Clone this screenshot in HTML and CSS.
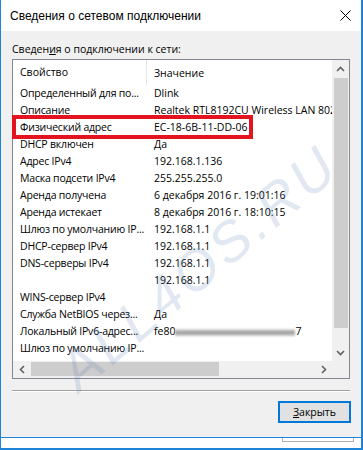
FILE: index.html
```html
<!DOCTYPE html>
<html lang="ru">
  <head>
    <meta charset="UTF-8" />
    <meta name="viewport" content="width=device-width, initial-scale=1.0" />
    <title>Сведения о сетевом подключении</title>
    <link rel="stylesheet" href="styles.css">
  </head>
  <body>
    <div class="window">
      <div class="titlebar">
        <span class="title">Сведения о сетевом подключении</span>
        <svg class="close" width="11" height="11" viewBox="0 0 11 11">
          <path d="M0.5 0.5 L10.5 10.5 M10.5 0.5 L0.5 10.5" stroke="#000" stroke-width="1" fill="none" />
        </svg>
      </div>
      <div class="content">
        <div class="caption">Сведен<u>и</u>я о подключении к сети:</div>
        <div class="listview">
          <div class="lv-main">
            <div class="lv-view">
              <div class="lv-header">
                <div class="col1">Свойство</div>
                <div class="col2">Значение</div>
              </div>
              <div class="row"><div class="col1">Определенный для по...</div><div class="col2">Dlink</div></div>
              <div class="row"><div class="col1">Описание</div><div class="col2">Realtek RTL8192CU Wireless LAN 802.11n USB 2.0 Network Adapter</div></div>
              <div class="row"><div class="col1">Физический адрес</div><div class="col2">EC-18-6B-11-DD-06</div></div>
              <div class="row"><div class="col1">DHCP включен</div><div class="col2">Да</div></div>
              <div class="row"><div class="col1">Адрес IPv4</div><div class="col2">192.168.1.136</div></div>
              <div class="row"><div class="col1">Маска подсети IPv4</div><div class="col2">255.255.255.0</div></div>
              <div class="row"><div class="col1">Аренда получена</div><div class="col2">6 декабря 2016 г. 19:01:16</div></div>
              <div class="row"><div class="col1">Аренда истекает</div><div class="col2">8 декабря 2016 г. 18:10:15</div></div>
              <div class="row"><div class="col1">Шлюз по умолчанию IP...</div><div class="col2">192.168.1.1</div></div>
              <div class="row"><div class="col1">DHCP-сервер IPv4</div><div class="col2">192.168.1.1</div></div>
              <div class="row"><div class="col1">DNS-серверы IPv4</div><div class="col2">192.168.1.1</div></div>
              <div class="row"><div class="col1"></div><div class="col2">192.168.1.1</div></div>
              <div class="row"><div class="col1">WINS-сервер IPv4</div><div class="col2"></div></div>
              <div class="row"><div class="col1">Служба NetBIOS через...</div><div class="col2">Да</div></div>
              <div class="row"><div class="col1">Локальный IPv6-адрес...</div><div class="col2">fe80<span class="blurred"></span>7</div></div>
              <div class="row"><div class="col1">Шлюз по умолчанию IP...</div><div class="col2"></div></div>
              <div class="row"><div class="col1">DNS-серверы IPv6</div><div class="col2"></div></div>
            </div>
            <div class="vscroll">
              <div class="arrow">
                <svg width="9" height="6" viewBox="0 0 9 6"><path d="M1 5 L4.5 1.5 L8 5" stroke="#606060" stroke-width="1.6" fill="none" /></svg>
              </div>
              <div class="vtrack"><div class="vthumb"></div></div>
              <div class="arrow">
                <svg width="9" height="6" viewBox="0 0 9 6"><path d="M1 1 L4.5 4.5 L8 1" stroke="#606060" stroke-width="1.6" fill="none" /></svg>
              </div>
            </div>
          </div>
          <div class="lv-bottom">
            <div class="hscroll">
              <div class="arrow">
                <svg width="6" height="9" viewBox="0 0 6 9"><path d="M5 1 L1.5 4.5 L5 8" stroke="#606060" stroke-width="1.6" fill="none" /></svg>
              </div>
              <div class="htrack"><div class="hthumb"></div></div>
              <div class="arrow">
                <svg width="6" height="9" viewBox="0 0 6 9"><path d="M1 1 L4.5 4.5 L1 8" stroke="#606060" stroke-width="1.6" fill="none" /></svg>
              </div>
            </div>
            <div class="corner"></div>
          </div>
        </div>
        <div class="separator"></div>
        <div class="buttons">
          <div class="button"><u>З</u>акрыть</div>
        </div>
      </div>
      <div class="highlight"></div>
      <div class="watermark">ALL4OS.RU</div>
    </div>
    <div class="behind"><div class="behind-button"></div></div>
  </body>
</html>
```

FILE: styles.css
```css
body {
  margin: 0;
  background-color: #fff;
  font-family: "Open Sans", "Liberation Sans", sans-serif;
  font-size: 10.5px;
  color: #000;
}
.window {
  position: relative;
  width: 363px;
  height: 438px;
  box-sizing: border-box;
  border-left: 1px solid #1e84d8;
  border-right: 2px solid #1e84d8;
  border-bottom: 1px solid #1e84d8;
  display: flex;
  flex-direction: column;
  overflow: hidden;
}
.titlebar {
  height: 31px;
  flex: none;
  background-color: #fff;
  display: flex;
  align-items: center;
  padding: 0 10px 0 9px;
}
.title {
  flex: 1;
  margin-top: 1px;
  font-family: "Liberation Sans", Arial, sans-serif;
  font-size: 12px;
}
.close {
  display: block;
}
.content {
  flex: 1;
  background-color: #f0f0f0;
  padding: 0 11px;
  display: flex;
  flex-direction: column;
}
.caption {
  line-height: 16px;
  margin-top: 10px;
  margin-bottom: 2px;
}
.listview {
  height: 320px;
  box-sizing: border-box;
  border: 1px solid #828790;
  background-color: #fff;
  display: flex;
  flex-direction: column;
}
.lv-main {
  height: 301px;
  display: flex;
}
.lv-view {
  flex: 1;
  overflow: hidden;
  white-space: nowrap;
}
.lv-header {
  height: 25px;
  display: flex;
  align-items: center;
}
.lv-header .col1 {
  border-right: 1px solid #e5e5e5;
  height: 25px;
  line-height: 25px;
}
.row {
  height: 17px;
  line-height: 17px;
  display: flex;
}
.col1 {
  width: 126px;
  flex: none;
  padding-left: 7px;
  overflow: hidden;
}
.row .col1 {
  margin-right: 1px;
  letter-spacing: -0.2px;
}
.col2 {
  padding-left: 7px;
}
.blurred {
  display: inline-block;
  width: 120px;
  height: 7px;
  vertical-align: -1px;
  background: linear-gradient(#e4e4e4, #9a9a9a 50%, #d0d0d0);
  filter: blur(1px);
}
.vscroll {
  width: 17px;
  flex: none;
  background-color: #f0f0f0;
  display: flex;
  flex-direction: column;
}
.arrow {
  width: 17px;
  height: 17px;
  flex: none;
  display: flex;
  justify-content: center;
  align-items: center;
}
.vtrack {
  flex: 1;
  padding-top: 1px;
}
.vthumb {
  height: 250px;
  margin: 0 1px 0 2px;
  background-color: #cdcdcd;
}
.lv-bottom {
  height: 17px;
  display: flex;
}
.hscroll {
  flex: 1;
  background-color: #f0f0f0;
  display: flex;
}
.htrack {
  flex: 1;
  padding: 1px 0;
}
.hthumb {
  width: 188px;
  height: 14px;
  margin-left: 1px;
  background-color: #cdcdcd;
}
.corner {
  width: 17px;
  background-color: #f0f0f0;
}
.separator {
  margin-top: 11px;
  border-top: 1px solid #a0a0a0;
  border-bottom: 1px solid #fff;
}
.buttons {
  display: flex;
  justify-content: flex-end;
  margin-right: -1px;
  margin-top: 9px;
}
.button {
  width: 73px;
  height: 22px;
  box-sizing: border-box;
  border: 2px solid #0078d7;
  background-color: #e1e1e1;
  display: flex;
  justify-content: center;
  align-items: center;
}
.highlight {
  position: absolute;
  left: 11px;
  top: 115px;
  width: 241px;
  height: 24px;
  box-sizing: border-box;
  border: 4px solid #e3141f;
}
.watermark {
  position: absolute;
  left: 84px;
  top: 344px;
  font-family: "Liberation Sans", Arial, sans-serif;
  font-size: 56px;
  line-height: 56px;
  font-style: italic;
  color: rgba(70, 110, 170, 0.16);
  letter-spacing: 4px;
  transform: rotate(-40deg);
  transform-origin: 0 100%;
  pointer-events: none;
  white-space: nowrap;
}
.behind {
  height: 12px;
  box-sizing: border-box;
  width: 363px;
  border-left: 1px solid #1e84d8;
  border-right: 2px solid #1e84d8;
  border-bottom: 2px solid #1e84d8;
  display: flex;
  justify-content: flex-end;
}
.behind-button {
  width: 72px;
  height: 4px;
  box-sizing: border-box;
  border: 1px solid #adadad;
  border-top: none;
  margin-right: 7px;
}
```
